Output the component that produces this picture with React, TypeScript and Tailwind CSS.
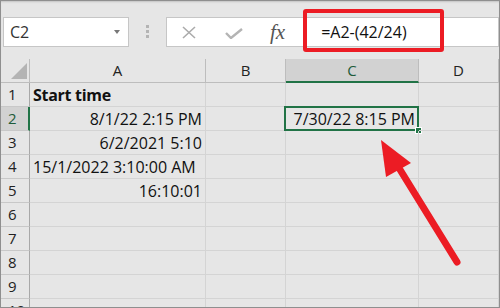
const cellFont = { fontFamily: '"Open Sans", "Noto Sans", sans-serif' };

type Cell = { text?: string; align?: "left" | "right"; bold?: boolean };

const rows: { num: number; a?: Cell; c?: Cell }[] = [
  { num: 1, a: { text: "Start time", align: "left", bold: true } },
  { num: 2, a: { text: "8/1/22 2:15 PM", align: "right" }, c: { text: "7/30/22 8:15 PM", align: "right" } },
  { num: 3, a: { text: "6/2/2021 5:10", align: "right" } },
  { num: 4, a: { text: "15/1/2022 3:10:00 AM", align: "left" } },
  { num: 5, a: { text: "16:10:01", align: "right" } },
  { num: 6 },
  { num: 7 },
  { num: 8 },
  { num: 9 },
  { num: 10 },
];

function DataCell({ cell, selected }: { cell?: Cell; selected?: boolean }) {
  return (
    <div
      className={
        "relative flex items-center border-r border-b border-[#d4d4d4] text-[16px] leading-[24px] text-[#111] whitespace-nowrap " +
        (cell?.align === "right" ? "justify-end pr-[3px]" : "justify-start pl-[3px]") +
        (cell?.bold ? " font-bold tracking-[-0.3px]" : "")
      }
      style={cellFont}
    >
      {cell?.text}
      {selected && (
        <>
          <div className="absolute left-[-2px] top-[-1px] right-[-1px] bottom-[-1px] border-2 border-[#217346]" />
          <div className="absolute right-[-4px] bottom-[-4px] w-[7px] h-[7px] bg-[#217346] border border-white" />
        </>
      )}
    </div>
  );
}

export default function App() {
  return (
    <div className="relative w-[500px] h-[308px] overflow-hidden bg-[#e6e6e6] border border-[#8f8f8f]">
      {/* formula bar */}
      <div className="flex items-start h-[58px] pt-[16px] pl-[2px] shadow-[inset_0_2px_2px_-1px_rgba(0,0,0,0.15)]">
        <div className="flex items-center justify-between w-[126px] h-[30px] bg-white border border-[#c6c6c6] pl-[6px] pr-[8px]">
          <span className="text-[16px] text-[#333]" style={cellFont}>C2</span>
          <span className="w-0 h-0 border-l-[3px] border-r-[3px] border-t-[4px] border-l-transparent border-r-transparent border-t-[#777]" />
        </div>
        <div className="flex flex-col gap-[2px] ml-[17px] mt-[8px]">
          <span className="w-[3px] h-[3px] bg-[#b4b4b4]" />
          <span className="w-[3px] h-[3px] bg-[#b4b4b4]" />
          <span className="w-[3px] h-[3px] bg-[#b4b4b4]" />
        </div>
        <div className="flex items-center flex-1 h-[30px] ml-[17px] bg-white border border-[#c6c6c6]">
          <svg width="14" height="13" viewBox="0 0 14 13" className="ml-[15px]">
            <path d="M1 1 L13 12 M13 1 L1 12" stroke="#ababab" strokeWidth="1.6" fill="none" />
          </svg>
          <svg width="18" height="11" viewBox="0 0 18 11" className="ml-[29px] mt-[3px]">
            <path d="M1 5 L6 10 L17 1" stroke="#b4b4b4" strokeWidth="2.4" fill="none" />
          </svg>
          <span
            className="ml-[27px] text-[21px] italic text-[#555] leading-none"
            style={{ fontFamily: '"Liberation Serif", "DejaVu Serif", serif' }}
          >
            fx
          </span>
          <span className="ml-[36px] text-[16px] text-[#111]" style={cellFont}>
            =A2-(42/24)
          </span>
        </div>
      </div>

      {/* sheet */}
      <div className="grid grid-cols-[29px_176px_80px_133px_80px] auto-rows-[24px]">
        <div className="relative border-r border-b border-[#bdbdbd]">
          <svg width="16" height="16" viewBox="0 0 16 16" className="absolute left-[10px] top-[4px]">
            <path d="M16 0 L16 16 L0 16 Z" fill="#b4b4b4" />
          </svg>
        </div>
        {["A", "B", "C", "D"].map((l) => (
          <div
            key={l}
            className={
              "flex items-center justify-center text-[15px] border-r border-[#bdbdbd] " +
              (l === "C"
                ? "bg-[#d2d2d2] text-[#1e5c3a] border-b-2 border-b-[#217346]"
                : "text-[#222] border-b border-b-[#bdbdbd]")
            }
            style={cellFont}
          >
            {l}
          </div>
        ))}

        {rows.map((r) => (
          <div key={r.num} className="contents">
            <div
              className={
                "flex items-center pl-[7px] text-[15px] border-b border-[#c8c8c8] " +
                (r.num === 2
                  ? "bg-[#d2d2d2] text-[#1e5c3a] border-r-2 border-r-[#217346]"
                  : "text-[#222] border-r border-r-[#a8a8a8]")
              }
              style={cellFont}
            >
              {r.num}
            </div>
            <DataCell cell={r.a} />
            <DataCell />
            <DataCell cell={r.c} selected={r.num === 2} />
            <DataCell />
          </div>
        ))}
      </div>

      {/* annotations */}
      <div className="absolute left-[302px] top-[8px] w-[141px] h-[43px] border-4 border-[#ec1c24] rounded-[3px]" />
      <svg className="absolute left-[-1px] top-[-1px]" width="500" height="308" viewBox="0 0 500 308">
        <line x1="457" y1="262" x2="399" y2="168" stroke="#ec1c24" strokeWidth="7" strokeLinecap="round" />
        <polygon points="381,140 411,163 386,177" fill="#ec1c24" />
      </svg>
    </div>
  );
}
